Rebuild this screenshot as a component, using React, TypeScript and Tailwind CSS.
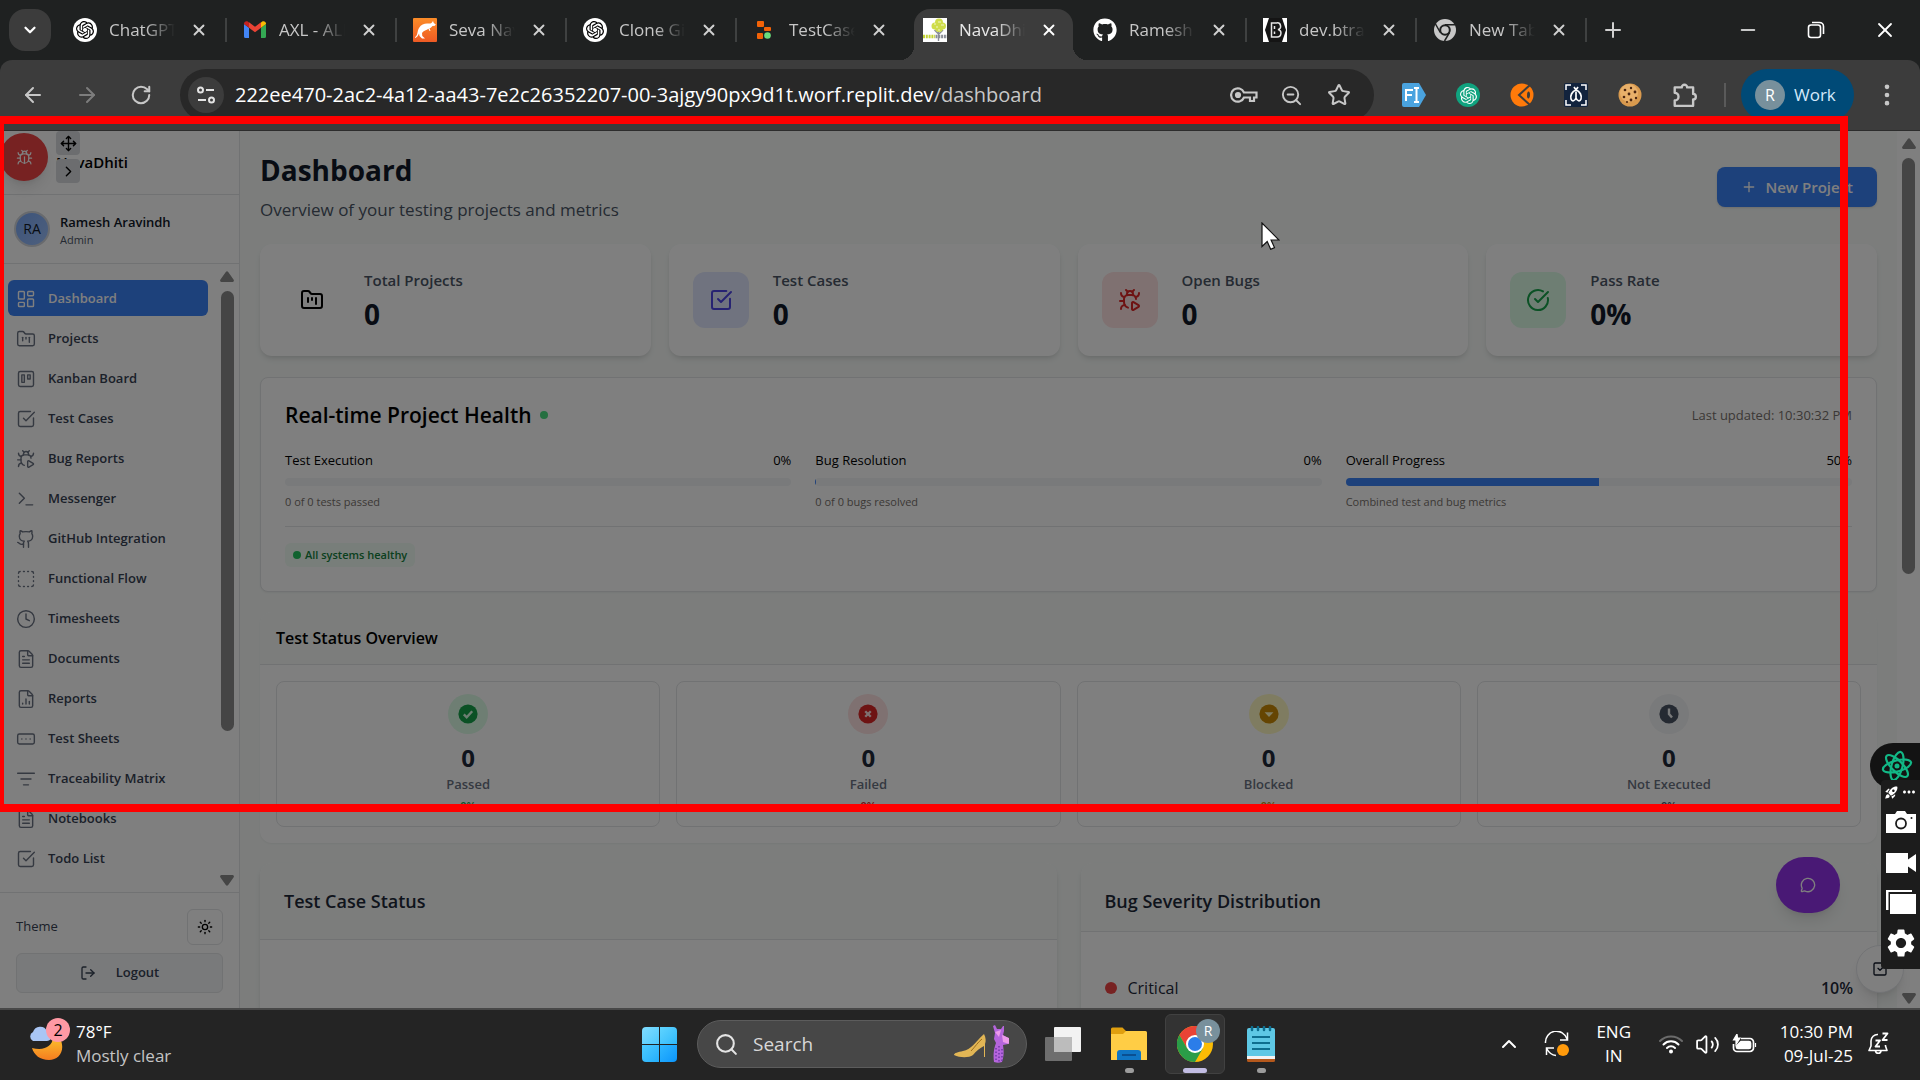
import React from "react";
import type { ReactNode } from "react";
import {
  ArrowLeft,
  ArrowRight,
  Bug,
  BugPlay,
  ChevronDown,
  ChevronRight,
  ChevronUp,
  CircleCheckBig,
  Clock,
  EllipsisVertical,
  FileChartColumn,
  FileText,
  FolderKanban,
  Github,
  LayoutDashboard,
  ListFilter,
  LogOut,
  MessageCircle,
  Minus,
  Move,
  Plus,
  RectangleEllipsis,
  RotateCw,
  Search,
  SquareCheckBig,
  SquareDashed,
  Star,
  Sun,
  Terminal,
  Trello,
  Volume2,
  X,
  ZoomOut,
} from "lucide-react";
import { FaGithub } from "react-icons/fa";
import { SiOpenai } from "react-icons/si";
import { MdSettings, MdRocketLaunch, MdMoreHoriz } from "react-icons/md";

/* ---------- favicons ---------- */

const OpenAiMark = () => (
  <span className="flex size-6 items-center justify-center rounded-full bg-white text-black">
    <SiOpenai size={18} />
  </span>
);

const GmailMark = () => (
  <svg viewBox="0 0 24 24" className="size-6" aria-hidden="true">
    <path d="M1 20V6l5 3.800V20H2.500A1.500 1.500 0 0 1 1 18.500z" fill="#4285f4" />
    <path d="M23 20V6l-5 3.800V20h3.500A1.500 1.500 0 0 0 23 18.500z" fill="#34a853" />
    <path d="M6 9.800 12 14.300l6-4.500V4.300l-6 4.500-6-4.500z" fill="#ea4335" />
    <path d="M18 9.800 23 6V5.500c0-2-2.200-3-3.800-1.900L18 4.500z" fill="#fbbc04" />
    <path d="M6 9.800 1 6V5.500c0-2 2.200-3 3.800-1.900L6 4.500z" fill="#c5221f" />
  </svg>
);

const KangarooMark = () => (
  <svg viewBox="0 0 24 24" className="size-6" aria-hidden="true">
    <defs>
      <linearGradient id="kg" x1="0" y1="0" x2="0" y2="1">
        <stop offset="0" stopColor="#fb8c28" />
        <stop offset="1" stopColor="#ee5a24" />
      </linearGradient>
    </defs>
    <rect width="24" height="24" rx="1" fill="url(#kg)" />
    <path
      d="M2 19c3-1 2-6 4-9 2-3.500 5-4.500 8-4.500 2 0 3 .3 4.500-.5L20 3l.8 2 2 1.500-1 1.200-2.300.3c-1 1-1.800 2-3 2.300l1 2.700-1.200-.3-.8-2c-2 1.500-5 2-6.500 4.300l.3 3 2.700 2.500H9l-2.500-2.500-.5-2.500C5 17.500 4.500 19.500 2 20z"
      fill="#fff"
    />
  </svg>
);

const ReplitMark = () => (
  <svg viewBox="0 0 24 24" className="size-6" aria-hidden="true">
    <rect x="4" y="3" width="7" height="6" rx="1" fill="#f26207" />
    <rect x="11" y="9" width="7" height="4" rx="1" fill="#f26207" />
    <rect x="4" y="15" width="6" height="6" rx="1" fill="#f26207" />
    <circle cx="14.500" cy="17.500" r="3.300" fill="#6bdc7c" />
  </svg>
);

const TreeMark = () => (
  <svg viewBox="0 0 24 24" className="size-6" aria-hidden="true">
    <rect width="24" height="24" fill="#fff" />
    <path d="M15.500 12v11M16 16l4-4M15.500 16l-4-4" stroke="#8b8f97" strokeWidth="1.400" />
    <g fill="#cfdd4a">
      <circle cx="16" cy="4.500" r="4" />
      <circle cx="12" cy="8" r="3.500" />
      <circle cx="19.500" cy="8" r="3.500" />
      <circle cx="16" cy="10" r="4" />
    </g>
    <path d="M11 6h2M15 4h3M13 9h2M18 7h3M15 12h2" stroke="#fff" strokeWidth=".7" />
    <path d="M0 18.500h12" stroke="#c3d335" strokeWidth="3.500" strokeDasharray="2 .8" />
    <path d="M12.500 18.500H24" stroke="#8b8f97" strokeWidth="3.500" strokeDasharray="2 .8" />
  </svg>
);

const HexMark = () => (
  <svg viewBox="0 0 24 24" className="size-6" aria-hidden="true">
    <rect width="24" height="24" fill="#fff" />
    <path d="M6 0h13l4 12-4 12H6L2 12z" fill="#151515" />
    <path d="M8.500 5h5a3.300 3.300 0 0 1 1.500 6.500A3.800 3.800 0 0 1 14 19H8.500zM11.500 8v3M11.500 13.500V16" fill="none" stroke="#e5e5e5" strokeWidth="1.500" />
  </svg>
);

const GreyChromeMark = () => (
  <svg viewBox="0 0 24 24" className="size-6" aria-hidden="true">
    <circle cx="12" cy="12" r="11" fill="#c7c7c7" />
    <circle cx="12" cy="12" r="4.800" fill="none" stroke="#1f2121" strokeWidth="2" />
    <path d="M12 6.800h10M7.300 14.500 2.500 6M16.500 14.700 11.500 23" stroke="#1f2121" strokeWidth="1.500" />
  </svg>
);

type Tab = { title: string; icon: ReactNode; active?: boolean; divider?: boolean };

const tabs: Tab[] = [
  { title: "ChatGPT", icon: <OpenAiMark />, divider: true },
  { title: "AXL - ALL", icon: <GmailMark />, divider: true },
  { title: "Seva Nav", icon: <KangarooMark />, divider: true },
  { title: "Clone Git", icon: <OpenAiMark />, divider: true },
  { title: "TestCase", icon: <ReplitMark /> },
  { title: "NavaDhiti", icon: <TreeMark />, active: true },
  { title: "Ramesh A", icon: <FaGithub size={24} color="#fff" />, divider: true },
  { title: "dev.btrack", icon: <HexMark />, divider: true },
  { title: "New Tab", icon: <GreyChromeMark />, divider: true },
];

function BrowserTab({ tab }: { tab: Tab }) {
  return (
    <div className="relative flex h-full w-[170px] items-center pl-4">
      {tab.active && (
        <div className="absolute top-[9px] right-1 bottom-0 left-[7px] rounded-t-2xl bg-[#3c3c3c]">
          <span className="absolute bottom-0 -left-3.5 size-3.5 bg-[radial-gradient(circle_at_0_0,transparent_14px,#3c3c3c_14px)]" />
          <span className="absolute -right-3.5 bottom-0 size-3.5 bg-[radial-gradient(circle_at_100%_0,transparent_14px,#3c3c3c_14px)]" />
        </div>
      )}
      <span className="relative flex size-6 shrink-0">{tab.icon}</span>
      <span
        className={
          "relative ml-3 w-[66px] overflow-hidden text-[17px] leading-6 whitespace-nowrap [mask-image:linear-gradient(to_right,#000_55%,transparent)] " +
          (tab.active ? "text-[#e8e8e8]" : "text-[#c7c7c7]")
        }
      >
        {tab.title}
      </span>
      <button
        aria-label={"Close " + tab.title}
        className={"relative ml-3.5 flex size-5 items-center justify-center " + (tab.active ? "text-white" : "text-[#d0d0d0]")}
      >
        <X size={18} strokeWidth={2.5} />
      </button>
      {tab.divider && <span className="absolute top-[18px] right-0 h-6 w-0.5 bg-[#3f4141]" />}
    </div>
  );
}

function TabStrip() {
  return (
    <div className="flex h-[60px] shrink-0 items-center bg-[#1f2121]">
      <button aria-label="Search tabs" className="ml-[9px] flex size-[42px] items-center justify-center rounded-2xl bg-[#3c3c3c] text-white">
        <ChevronDown size={18} strokeWidth={3} />
      </button>
      <div className="ml-1.5 flex h-full">
        {tabs.map((t) => (
          <BrowserTab key={t.title} tab={t} />
        ))}
      </div>
      <button aria-label="New tab" className="ml-3.5 text-[#d0d0d0]">
        <Plus size={24} strokeWidth={2} />
      </button>
      <div className="ml-auto flex text-white">
        <button aria-label="Minimize" className="flex h-[60px] w-[68px] items-center justify-center">
          <Minus size={22} strokeWidth={1.8} />
        </button>
        <button aria-label="Restore" className="flex h-[60px] w-[68px] items-center justify-center">
          <svg viewBox="0 0 18 18" className="size-[18px]" fill="none" stroke="currentColor" strokeWidth="1.600">
            <rect x="1.500" y="4" width="12" height="12.500" rx="2.500" />
            <path d="M5 1.500h7.500a4 4 0 0 1 4 4V13" />
          </svg>
        </button>
        <button aria-label="Close window" className="flex h-[60px] w-[70px] items-center justify-center">
          <X size={24} strokeWidth={1.8} />
        </button>
      </div>
    </div>
  );
}

function Toolbar() {
  return (
    <div className="bg-[#1f2121]">
      <div className="flex h-[71px] items-start rounded-t-xl border-b border-[#2c2c2c] bg-[#3c3c3c] pt-[9px] text-[#c7c7c7]">
        <div className="flex h-[52px] items-center">
          <button aria-label="Back" className="ml-[21px]">
            <ArrowLeft size={24} />
          </button>
          <button aria-label="Forward" className="ml-[30px] text-[#7d7d7d]">
            <ArrowRight size={24} />
          </button>
          <button aria-label="Reload" className="ml-[31px]">
            <RotateCw size={22} strokeWidth={2.2} />
          </button>
        </div>
        <div className="ml-7 flex h-[52px] flex-1 items-center rounded-full bg-[#282828] pl-2">
          <button aria-label="Site information" className="flex size-9 shrink-0 items-center justify-center rounded-full bg-[#3c3c3c] text-[#e3e3e3]">
            <svg viewBox="0 0 20 20" className="size-5" fill="none" stroke="currentColor" strokeWidth="2">
              <circle cx="4.500" cy="5" r="2.500" />
              <path d="M10 5h8M2 15h8" />
              <circle cx="15.500" cy="15" r="2.500" />
            </svg>
          </button>
          <div className="ml-[11px] flex flex-1 items-center text-xl leading-7 whitespace-nowrap text-white">
            <span>222ee470-2ac2-4a12-aa43-7e2c26352207-00-3ajgy90px9d1t.worf.replit.dev</span>
            <span className="text-[#c7c7c7]">/dashboard</span>
          </div>
          <button aria-label="Passwords">
            <svg viewBox="0 0 28 20" className="h-5 w-7" fill="none" stroke="currentColor" strokeWidth="2.200">
              <path d="M14 7.500h12.500v5H24V16h-4v-3.500h-6A6.700 6.700 0 1 1 14 7.500z" />
              <circle cx="8" cy="10" r="2" fill="currentColor" />
            </svg>
          </button>
          <button aria-label="Zoom" className="ml-[22px]">
            <ZoomOut size={23} />
          </button>
          <button aria-label="Bookmark" className="mr-[23px] ml-6">
            <Star size={24} />
          </button>
        </div>
        <div className="ml-7 flex h-[52px] items-center gap-[30px]">
          <svg viewBox="0 0 24 24" className="size-6">
            <path d="M2 0h15l7 12-7 12H2a2 2 0 0 1-2-2V2a2 2 0 0 1 2-2z" fill="#4aa3df" />
            <path d="M4 18V7h7M4 12h6M12 5h2.500v14H12M17 5h-2.500M17 19h-2.500" fill="none" stroke="#fff" strokeWidth="2" />
          </svg>
          <span className="flex size-6 items-center justify-center rounded-full bg-[#10a37f] text-white">
            <SiOpenai size={17} />
          </span>
          <svg viewBox="0 0 24 24" className="size-6">
            <circle cx="12" cy="12" r="11.500" fill="#ff7a0a" />
            <path d="M20 2 9 12l11 10" fill="none" stroke="#3c3c3c" strokeWidth="2" />
            <path d="M17 13c0-3 .5-4.500 1.500-4.500s1.500 1.500 1.500 3.500-1 3.500-1.500 3.500S17 15 17 13z" fill="#3c3c3c" />
          </svg>
          <svg viewBox="0 0 24 24" className="size-6">
            <rect width="24" height="24" rx="2" fill="#12233d" />
            <path d="M2 7V2h5M17 2h5v5M22 17v5h-5M7 22H2v-5" fill="none" stroke="#fff" strokeWidth="1.500" />
            <path d="m10 4 2 3 2-3M12 7c-4 1-6 6-5 9s4 2 5-1c1 3 4 4 5 1s-1-8-5-9zM12 9v6" fill="none" stroke="#fff" strokeWidth="1.700" />
          </svg>
          <svg viewBox="0 0 24 24" className="size-6">
            <circle cx="12" cy="12" r="11.500" fill="#d99a4e" />
            <circle cx="11" cy="10" r="9" fill="#e8b06a" />
            <g fill="#4a2511">
              <circle cx="7" cy="7" r="1.300" />
              <circle cx="13" cy="5" r="1.200" />
              <circle cx="17" cy="9" r="1.400" />
              <circle cx="11" cy="11" r="1.400" />
              <circle cx="6" cy="14" r="1.300" />
              <circle cx="13" cy="17" r="1.400" />
              <circle cx="18" cy="15" r="1.200" />
              <circle cx="9" cy="19" r="1" />
            </g>
          </svg>
          <svg viewBox="0 0 24 24" className="size-[26px]" fill="none" stroke="currentColor" strokeWidth="2.200" strokeLinejoin="round">
            <path d="M2.500 5H9a2.500 2.500 0 1 1 5 0h5.500v6a2.500 2.500 0 1 1 0 5v6h-17v-5a3.300 3.300 0 0 0 0-7z" />
          </svg>
        </div>
        <span className="mt-3.5 ml-[26px] h-6 w-0.5 bg-[#5a5a5a]" />
        <button className="ml-[15px] flex h-[52px] w-[113px] items-center rounded-full bg-[#004a77] pl-3.5 text-[17px] text-[#d3e9fb]">
          <span className="flex size-[30px] items-center justify-center rounded-full bg-[#78909c] text-base text-white">R</span>
          <span className="ml-[9px]">Work</span>
        </button>
        <button aria-label="Menu" className="mr-[19px] ml-[19px] flex h-[52px] items-center">
          <EllipsisVertical size={28} fill="currentColor" />
        </button>
      </div>
    </div>
  );
}

/* ---------- sidebar ---------- */

const navItems = [
  { label: "Dashboard", Icon: LayoutDashboard },
  { label: "Projects", Icon: FolderKanban },
  { label: "Kanban Board", Icon: Trello },
  { label: "Test Cases", Icon: SquareCheckBig },
  { label: "Bug Reports", Icon: BugPlay },
  { label: "Messenger", Icon: Terminal },
  { label: "GitHub Integration", Icon: Github },
  { label: "Functional Flow", Icon: SquareDashed },
  { label: "Timesheets", Icon: Clock },
  { label: "Documents", Icon: FileText },
  { label: "Reports", Icon: FileChartColumn },
  { label: "Test Sheets", Icon: RectangleEllipsis },
  { label: "Traceability Matrix", Icon: ListFilter },
  { label: "Notebooks", Icon: FileText },
  { label: "Todo List", Icon: SquareCheckBig },
];

const Arrow = ({ down }: { down?: boolean }) => (
  <svg viewBox="0 0 14 11" className={"h-[11px] w-3.5 " + (down ? "rotate-180" : "")} fill="#8a8a8a">
    <path d="M5.800 1a1.500 1.500 0 0 1 2.400 0l5.300 7.500A1.500 1.500 0 0 1 12.300 11H1.700A1.500 1.500 0 0 1 .5 8.500z" />
  </svg>
);

function Sidebar() {
  return (
    <aside className="relative flex w-60 shrink-0 flex-col border-r border-[#e2e4e6] bg-white">
      <div className="flex h-16 shrink-0 items-center border-b border-[#e2e4e6] pl-14">
        <span className="text-[15px] font-semibold text-black">NavaDhiti</span>
      </div>
      <div className="flex h-[69px] shrink-0 items-center border-b border-[#e2e4e6] pl-3.5">
        <span className="flex size-9 items-center justify-center rounded-full border-2 border-gray-300 bg-linear-to-br from-[#7aa7f5] to-[#9cc0fb] text-sm text-gray-900">
          RA
        </span>
        <div className="ml-2.5 pt-px">
          <p className="text-[13px] leading-5 font-semibold text-gray-900">Ramesh Aravindh</p>
          <p className="text-[11px] leading-4 text-gray-600">Admin</p>
        </div>
      </div>
      <div className="flex min-h-0 flex-1">
        <nav className="flex flex-1 flex-col gap-1 overflow-hidden pt-4 pl-2">
          {navItems.map(({ label, Icon }, i) => (
            <a
              key={label}
              href="#"
              className={
                "flex h-9 w-[200px] shrink-0 items-center gap-3 rounded-md pt-px pl-2 text-[13px] font-semibold " +
                (i === 0 ? "bg-[#3b82f6] text-white" : "text-gray-700")
              }
            >
              <Icon size={20} strokeWidth={1.7} className={i === 0 ? "text-white" : "text-gray-500"} />
              {label}
            </a>
          ))}
        </nav>
        <div className="flex w-6 shrink-0 flex-col items-center pt-[7px] pb-1.5">
          <Arrow />
          <span className="mt-[9px] h-[440px] w-[13px] rounded-full bg-[#8a8a8a]" />
          <span className="mt-auto flex">
            <Arrow down />
          </span>
        </div>
      </div>
      <div className="shrink-0 border-t border-[#e2e4e6] px-4 pt-4 pb-[15px]">
        <div className="flex items-center justify-between">
          <span className="text-[13px] text-gray-700">Theme</span>
          <button aria-label="Toggle theme" className="flex size-9 items-center justify-center rounded-md border border-[#e2e4e6] text-black">
            <Sun size={16} />
          </button>
        </div>
        <button className="mt-2 flex h-10 w-full items-center justify-center gap-5 rounded-md border border-[#e2e4e6] bg-gray-100 text-[13px] font-semibold text-gray-700">
          <LogOut size={16} />
          Logout
        </button>
      </div>

      <button aria-label="Report bug" className="absolute top-0.5 left-0 flex size-12 items-center justify-center rounded-full bg-[#ef4444] text-white shadow-lg">
        <Bug size={17} strokeWidth={1.7} />
      </button>
      <button aria-label="Move" className="absolute top-0 left-14 flex size-6 items-center justify-center rounded bg-[#d9dbdf] text-black">
        <Move size={17} />
      </button>
      <button aria-label="Collapse" className="absolute top-7 left-14 flex size-6 items-center justify-center rounded bg-[#d9dbdf] text-black">
        <ChevronRight size={17} />
      </button>
    </aside>
  );
}

/* ---------- dashboard ---------- */

const stats = [
  { label: "Total Projects", value: "0", Icon: FolderKanban, tone: "text-black" },
  { label: "Test Cases", value: "0", Icon: SquareCheckBig, tone: "bg-[#e0e7ff] text-[#4f46e5]" },
  { label: "Open Bugs", value: "0", Icon: BugPlay, tone: "bg-[#fee2e2] text-[#dc2626]" },
  { label: "Pass Rate", value: "0%", Icon: CircleCheckBig, tone: "bg-[#dcfce7] text-[#16a34a]" },
];

const health = [
  { label: "Test Execution", pct: "0%", fill: 0, note: "0 of 0 tests passed" },
  { label: "Bug Resolution", pct: "0%", fill: 0.2, note: "0 of 0 bugs resolved" },
  { label: "Overall Progress", pct: "50%", fill: 50, note: "Combined test and bug metrics" },
];

const statuses = [
  { label: "Passed", ring: "bg-[#dcfce7]", tone: "text-[#16a34a]", glyph: <path d="m6.500 10.300 2.400 2.400 4.600-5" stroke="#dcfce7" /> },
  { label: "Failed", ring: "bg-[#fee2e2]", tone: "text-[#dc2626]", glyph: <path d="m7.700 7.700 4.600 4.600m0-4.600-4.600 4.600" stroke="#fee2e2" /> },
  { label: "Blocked", ring: "bg-[#fef9c3]", tone: "text-[#ca8a04]", glyph: <path d="M8 9.200h4l-2 2.200z" fill="#fef9c3" stroke="#fef9c3" strokeWidth="1.500" /> },
  { label: "Not Executed", ring: "bg-gray-100", tone: "text-gray-600", glyph: <path d="M10 5.500V10l2.500 3" stroke="#f3f4f6" /> },
];

function Dashboard() {
  return (
    <main className="min-w-0 flex-1 overflow-hidden bg-[#f8fbf9] px-5 pt-[19px]">
      <header className="flex items-center justify-between">
        <div>
          <h1 className="text-[28px] leading-10 font-bold text-gray-900">Dashboard</h1>
          <p className="mt-1.5 text-[17px] leading-7 text-gray-600">Overview of your testing projects and metrics</p>
        </div>
        <button className="flex h-10 items-center gap-2 rounded-lg bg-[#3b82f6] px-6 text-[15px] font-semibold text-white shadow-sm">
          <Plus size={16} />
          New Project
        </button>
      </header>

      <section className="mt-5 grid grid-cols-4 gap-[18px]">
        {stats.map(({ label, value, Icon, tone }) => (
          <div key={label} className="flex items-center gap-6 rounded-xl bg-white px-6 py-7 shadow-md">
            <span className={"flex size-14 shrink-0 items-center justify-center rounded-xl " + tone}>
              <Icon size={24} />
            </span>
            <div className="-my-1">
              <p className="text-[15px] leading-6 font-semibold text-gray-600">{label}</p>
              <p className="mt-1 text-[28px] leading-9 font-bold text-gray-900">{value}</p>
            </div>
          </div>
        ))}
      </section>

      <section className="mt-[21px] rounded-lg border border-[#e2e4e6] bg-white p-6 shadow-xs">
        <div className="flex items-center justify-between">
          <h2 className="flex items-center text-[21px] leading-[26px] font-semibold text-black">
            Real-time Project Health
            <span className="ml-2 size-2 rounded-full bg-[#4ade80]" />
          </h2>
          <span className="text-[13px] leading-5 text-[#78716c]">Last updated: 10:30:32 PM</span>
        </div>
        <div className="mt-[22px] grid grid-cols-3 gap-6 text-black">
          {health.map((h) => (
            <div key={h.label}>
              <div className="flex justify-between text-[13px] leading-5">
                <span>{h.label}</span>
                <span>{h.pct}</span>
              </div>
              <div role="progressbar" aria-label={h.label} aria-valuenow={h.fill} className="mt-2 h-2 overflow-hidden rounded-full bg-gray-100">
                <div className="h-full bg-[#3b82f6]" style={{ width: h.fill + "%" }} />
              </div>
              <p className="mt-2 text-[11px] leading-4 text-[#78716c]">{h.note}</p>
            </div>
          ))}
        </div>
        <div className="mt-4 flex border-t border-[#e2e4e6] pt-4">
          <span className="flex h-6 items-center gap-1 rounded-md bg-[#f0fdf4] px-2 text-[11px] font-semibold text-[#15803d]">
            <span className="size-2 rounded-full bg-[#22c55e]" />
            All systems healthy
          </span>
        </div>
      </section>

      <section className="mt-5 rounded-xl bg-white shadow-xs">
        <h2 className="rounded-t-xl border-b border-[#e2e4e6] bg-[#f8fbf9] px-4 py-3 text-base leading-7 font-semibold text-black">
          Test Status Overview
        </h2>
        <div className="grid grid-cols-4 gap-4 p-4">
          {statuses.map((s) => (
            <div key={s.label} className="flex flex-col items-center rounded-lg border border-[#e2e4e6] py-3">
              <span className={"flex size-10 items-center justify-center rounded-full " + s.ring + " " + s.tone}>
                <svg viewBox="0 0 20 20" className="size-6" fill="none" strokeWidth="2">
                  <circle cx="10" cy="10" r="8" fill="currentColor" />
                  {s.glyph}
                </svg>
              </span>
              <p className="mt-2 text-2xl leading-8 font-bold text-gray-800">0</p>
              <p className="text-[13px] leading-5 font-semibold text-gray-500">{s.label}</p>
              <p className={"mt-1 text-[11px] leading-4 font-semibold " + s.tone}>0%</p>
            </div>
          ))}
        </div>
      </section>

      <section className="mt-5 grid grid-cols-2 gap-6">
        <div className="h-80 rounded-xl bg-white shadow-md">
          <h2 className="rounded-t-xl border-b border-[#e2e4e6] bg-[#f8fbf9] p-6 text-lg leading-7 font-semibold text-gray-800">
            Test Case Status
          </h2>
        </div>
        <div className="h-80 rounded-xl bg-white shadow-md">
          <h2 className="rounded-t-xl border-b border-[#e2e4e6] bg-[#f8fbf9] px-6 pt-6 pb-4 text-lg leading-7 font-semibold text-gray-800">
            Bug Severity Distribution
          </h2>
          <div className="flex items-center px-6 pt-11 text-base leading-6 text-gray-800">
            <span className="size-3 rounded-full bg-[#ef4444]" />
            <span className="ml-[11px]">Critical</span>
            <span className="ml-auto font-semibold">10%</span>
          </div>
        </div>
      </section>
    </main>
  );
}

function Atom({ className }: { className: string }) {
  return (
    <svg viewBox="0 0 32 32" className={className} fill="none" stroke="#12b886" strokeWidth="2.200">
      {[15, 75, 135].map((a) => (
        <ellipse key={a} cx="16" cy="16" rx="5.500" ry="14.500" transform={"rotate(" + a + " 16 16)"} />
      ))}
      <circle cx="16" cy="16" r="2.500" fill="#12b886" stroke="none" />
    </svg>
  );
}

function FloatingTools() {
  return (
    <>
      <div className="absolute top-[612px] right-0 flex h-[46px] w-[50px] items-center justify-center rounded-l-full bg-[#131313] pl-1">
        <Atom className="size-8" />
      </div>
      <div className="absolute top-[649px] right-0 flex h-[189px] w-[39px] flex-col items-center rounded-l bg-[#1c1c1c] text-white">
        <div className="flex h-6 items-center gap-px">
          <MdRocketLaunch size={15} />
          <MdMoreHoriz size={18} />
        </div>
        <button aria-label="Screenshot" className="mt-[7px]">
          <svg viewBox="0 0 30 22" className="h-[22px] w-[30px]" fill="currentColor">
            <path d="M0 3h9l2-3h8l2 3h9v19H0z" />
            <circle cx="15" cy="12.500" r="5" fill="none" stroke="#1c1c1c" strokeWidth="1.800" />
            <circle cx="25.500" cy="7" r="1" fill="#1c1c1c" />
          </svg>
        </button>
        <button aria-label="Record" className="mt-5">
          <svg viewBox="0 0 30 20" className="h-5 w-[30px]" fill="currentColor">
            <path d="M0 0h22v6.500L30 1v18l-8-5.500V20H0z" />
          </svg>
        </button>
        <button aria-label="Gallery" className="mt-[17px]">
          <svg viewBox="0 0 30 24" className="h-6 w-[30px]" fill="currentColor">
            <path d="M0 0h26v2H2.500v18H0z" />
            <path d="M4 4h26v20H4z" />
          </svg>
        </button>
        <button aria-label="Settings" className="mt-3">
          <MdSettings size={34} />
        </button>
      </div>
    </>
  );
}

function Page() {
  return (
    <div className="relative flex min-h-0 flex-1 overflow-hidden">
      <Sidebar />
      <Dashboard />
      <div className="flex w-[23px] shrink-0 flex-col items-center bg-white pt-[7px] pb-1">
        <Arrow />
        <span className="mt-[9px] h-[416px] w-[13px] rounded-full bg-[#8a8a8a]" />
        <span className="mt-auto flex">
          <Arrow down />
        </span>
      </div>
      <button aria-label="Open chat" className="absolute right-20 bottom-[95px] flex h-14 w-16 items-center justify-center rounded-full bg-[#9333ea] text-white shadow-lg">
        <MessageCircle size={16} />
      </button>
      <button aria-label="Tasks" className="absolute right-4 bottom-[15px] flex size-12 items-center justify-center rounded-full border border-gray-200 bg-white text-gray-900 shadow-lg">
        <SquareCheckBig size={16} />
      </button>
      <div className="pointer-events-none absolute inset-0 bg-black/50" />
      <FloatingTools />
      <svg viewBox="0 0 19 28" className="absolute top-[91px] left-[1261px] h-7 w-[19px]">
        <path d="M1 1v23.500l5.200-5 3.500 7.800 3.800-1.700-3.400-7.600H18z" fill="#fff" stroke="#111" strokeWidth="1.200" />
      </svg>
    </div>
  );
}

/* ---------- taskbar ---------- */

const ChromeLogo = () => (
  <svg viewBox="0 0 36 36" className="size-9">
    <circle cx="18" cy="18" r="18" fill="#fbbc04" />
    <path d="M18 9h15.600a18 18 0 0 0-31.200 0l7.800 13.500z" fill="#ea4335" />
    <path d="M2.400 9a18 18 0 0 0 15.600 27l7.800-13.500H10.200z" fill="#2a9d48" />
    <circle cx="18" cy="18" r="9" fill="#fff" />
    <circle cx="18" cy="18" r="7" fill="#2b7de9" />
  </svg>
);

function Taskbar() {
  return (
    <footer className="relative flex h-[72px] shrink-0 items-center border-t-2 border-[#484848] bg-[#242424] pr-0.5 pb-0.5 text-white">
      <button className="flex flex-1 items-center pl-7 text-left">
        <span className="relative block h-12 w-9">
          <svg viewBox="0 0 36 48" className="h-12 w-9">
            <defs>
              <linearGradient id="moon" x1="0" y1="0" x2="0" y2="1">
                <stop offset="0" stopColor="#fbc02d" />
                <stop offset="1" stopColor="#f57c1f" />
              </linearGradient>
            </defs>
            <path d="M32 18c6 13-1 22-11 22-9 0-15-5-17-12 13 3 20-2 21-10z" fill="url(#moon)" />
            <path d="M5 21a5 5 0 0 1 0-9 7.500 7.500 0 0 1 14-1c6 1 6 10 0 10z" fill="#a9c6f5" />
          </svg>
          <span className="absolute -top-0.5 left-[18px] flex size-6 items-center justify-center rounded-full bg-[#ff99a4] text-base text-black">2</span>
        </span>
        <span className="ml-3">
          <span className="block text-[17px] leading-6">78°F</span>
          <span className="block text-[17px] leading-6 text-[#c5c5c5]">Mostly clear</span>
        </span>
      </button>

      <div className="flex items-center">
        <button aria-label="Start" className="grid size-[35px] grid-cols-2 gap-px">
          <span className="rounded-tl-sm bg-linear-to-br from-[#7fdcff] to-[#4cc9fd]" />
          <span className="rounded-tr-sm bg-linear-to-br from-[#5fd4ff] to-[#2db9fb]" />
          <span className="rounded-bl-sm bg-linear-to-br from-[#4bcbff] to-[#22aefc]" />
          <span className="rounded-br-sm bg-linear-to-br from-[#2fb8ff] to-[#0a95fb]" />
        </button>
        <label className="ml-5 flex h-12 w-[330px] items-center rounded-full border border-[#5c5c5c] bg-[#474747] pl-4">
          <Search size={25} strokeWidth={2} className="text-[#e4e4e4]" />
          <input aria-label="Search" placeholder="Search" className="ml-3.5 w-[180px] bg-transparent text-[19px] placeholder-[#d8d8d8] outline-none" />
          <svg viewBox="0 0 60 44" className="mr-3.5 ml-auto h-11 w-[60px]">
            <path d="M32 12c2 4 2 7 1 10v13h-1V24c-4 2-8 5-11 9-4 3-13 3-19 0 0-2 4-3 9-4 8-1 12-9 21-17z" fill="#e2b655" />
            <path d="M30 17c-4 3-7 8-11 12" stroke="#9d6e1c" fill="none" />
            <path d="M41 4l2-1 2 4h4l2-3 1 0v5l-1 4 5 3v6l-5 1c1 7 1 11-1 17-3 1-5 1-8 0-1-8 0-14 2-19l-2-4 1-6z" fill="#b565dc" />
            <path d="m50 13 7 3v6l-6-2zM43 10l6-2-2 7z" fill="#ec9bea" />
            <path d="M44 26v13M47 24v16M50 27v12" stroke="#6f3aa8" strokeDasharray="1.500 2" strokeWidth="1.500" />
          </svg>
        </label>
        <button aria-label="Task view" className="ml-[18px]">
          <svg viewBox="0 0 36 35" className="h-[35px] w-9">
            <rect x="0" y="10" width="27" height="24" rx="1" fill="#6e6e6e" />
            <rect x="9" y="0" width="27" height="25" rx="1" fill="#f2f2f2" />
            <path d="M9 10h18v15H9z" fill="#bcbcbc" />
          </svg>
        </button>
        <button aria-label="File Explorer" className="relative ml-[30px]">
          <svg viewBox="0 0 36 34" className="h-[34px] w-9">
            <path d="M0 2a1.500 1.500 0 0 1 1.500-1.500h10L15 4v4H0z" fill="#e09f0f" />
            <path d="M0 7h12l3-3h19.500A1.500 1.500 0 0 1 36 5.500V33H0z" fill="#ffcd45" />
            <path d="M6 33V26a3 3 0 0 1 3-3h18a3 3 0 0 1 3 3v7z" fill="#0f75c4" />
            <path d="M11 28h14" stroke="#0a4f91" strokeWidth="2" />
          </svg>
          <span className="absolute -bottom-3 left-3.5 h-[5px] w-[9px] rounded-full bg-[#9c9c9c]" />
        </button>
        <button aria-label="Chrome" className="relative ml-[18px] flex size-[60px] items-center justify-center rounded-md border border-[#414141] bg-[#333333]">
          <ChromeLogo />
          <span className="absolute top-1 right-1 flex size-6 items-center justify-center rounded-full bg-[#78909c] text-sm text-white">R</span>
          <span className="absolute bottom-0 left-[17px] h-[5px] w-6 rounded-full bg-[#c2bde3]" />
        </button>
        <button aria-label="Notepad" className="relative ml-[22px]">
          <svg viewBox="0 0 28 36" className="h-9 w-7">
            <path d="M0 4a2 2 0 0 1 2-2h24a2 2 0 0 1 2 2v27H0z" fill="#5ec8e5" />
            <path d="M0 30h28v3H0z" fill="#f3f3f3" />
            <path d="M0 33h28v1.500A1.500 1.500 0 0 1 26.500 36h-25A1.500 1.500 0 0 1 0 34.500z" fill="#b4581c" />
            <path d="M5 1v3M11 1v3M17 1v3M23 1v3" stroke="#0e6e8f" strokeWidth="2.500" strokeLinecap="round" />
            <path d="M5 11h18M5 17h18M5 23h18" stroke="#0e6e8f" strokeWidth="2" />
          </svg>
          <span className="absolute -bottom-[11px] left-2.5 h-[5px] w-[9px] rounded-full bg-[#9c9c9c]" />
        </button>
      </div>

      <div className="flex flex-1 items-center justify-end pr-[29px] text-[17px] leading-6">
        <ChevronUp size={24} strokeWidth={2} />
        <svg viewBox="0 0 26 26" className="ml-[23px] size-[26px]" fill="none" stroke="#fff" strokeWidth="1.500">
          <path d="M1.500 12A11 11 0 0 1 23 8M23.500 1.500V9H16" />
          <path d="M2.500 24v-7H10M3 18c2 4 5 6 9 6.500" />
          <circle cx="19" cy="19" r="6" fill="#ff9a0b" stroke="none" />
        </svg>
        <span className="ml-[26px] w-9 text-center">
          ENG
          <br />
          IN
        </span>
        <svg viewBox="0 0 24 20" className="ml-[27px] h-5 w-6" fill="none" stroke="#fff" strokeWidth="2" strokeLinecap="round">
          <path d="M1 7a15.500 15.500 0 0 1 22 0" stroke="#6b6b6b" />
          <path d="M4.500 10.500a10.500 10.500 0 0 1 15 0M8 14a5.700 5.700 0 0 1 8 0" />
          <circle cx="12" cy="17.500" r="1" />
        </svg>
        <Volume2 size={25} strokeWidth={1.7} className="ml-3" />
        <svg viewBox="0 0 25 20" className="ml-3 h-5 w-[25px]" fill="none" stroke="#fff" strokeWidth="1.700">
          <path d="M9 4.500h9A3.500 3.500 0 0 1 21.500 8v6a3.500 3.500 0 0 1-3.500 3.500H5A3.500 3.500 0 0 1 1.500 14v-4" />
          <path d="M9 7.500h8a1.500 1.500 0 0 1 1.500 1.500v4a1.500 1.500 0 0 1-1.500 1.500H6A1.500 1.500 0 0 1 4.500 13v-1z" fill="#fff" />
          <path d="M23.500 9v4M5 0 1.500 6H4v4.500L8 4H5.500z" fill="#fff" strokeWidth="1.200" />
        </svg>
        <span className="ml-[23px] text-right">
          10:30 PM
          <br />
          09-Jul-25
        </span>
        <svg viewBox="0 0 22 24" className="ml-3.5 h-6 w-[22px]" fill="none" stroke="#fff" strokeWidth="1.600" strokeLinejoin="round">
          <path d="M11 2.500A6.500 6.500 0 0 0 4 9v5l-2 4.500h18L18.500 14v-1M8.500 19a2.800 2.800 0 0 0 5.500 0" />
          <path d="M8.500 8.500H13l-4.500 6H13M15.500 1.500h5l-5 6.500h5" strokeWidth="1.800" />
        </svg>
      </div>
    </footer>
  );
}

export default function App() {
  return (
    <div className="relative flex h-screen flex-col overflow-hidden font-['Open_Sans','Noto_Sans',sans-serif]">
      <TabStrip />
      <Toolbar />
      <Page />
      <Taskbar />
      <div className="pointer-events-none absolute top-[116px] right-[72px] left-0 h-[696px] border-8 border-l-4 border-[#ff0000]" />
    </div>
  );
}
